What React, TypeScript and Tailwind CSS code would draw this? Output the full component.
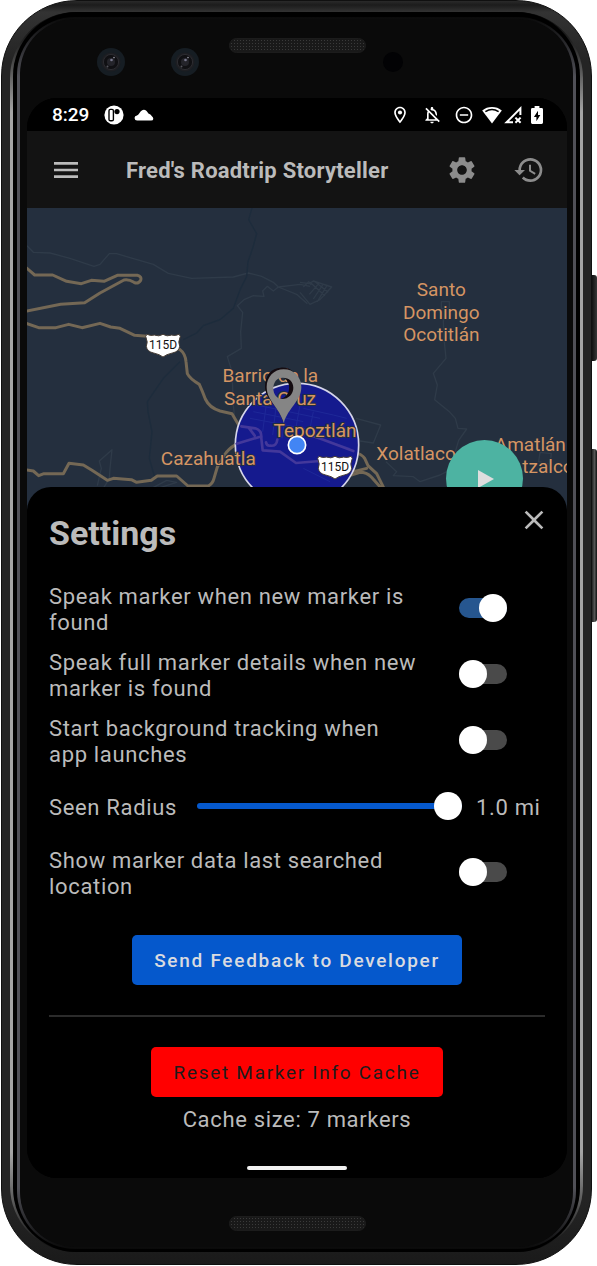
import { useState } from "react";
import {
  MdClose,
  MdHistory,
  MdMenu,
  MdOutlineDoNotDisturbOn,
  MdOutlineLocationOn,
  MdOutlineNotificationsOff,
  MdSettings,
} from "react-icons/md";

const options = [
  { id: "speak-new", label: "Speak marker when new marker is found", on: true },
  { id: "speak-full", label: "Speak full marker details when new marker is found", on: false },
  { id: "tracking", label: "Start background tracking when app launches", on: false },
];

function SwitchRow({ id, label, on }: { id: string; label: string; on: boolean }) {
  return (
    <div className="flex min-h-13 items-center justify-between pr-[38px]">
      <label htmlFor={id} className="w-[370px]">
        {label}
      </label>
      <input
        id={id}
        type="checkbox"
        role="switch"
        defaultChecked={on}
        className="relative mb-1 h-5 w-12 shrink-0 appearance-none rounded-full bg-[#4a4a4a] before:absolute before:-top-1 before:left-0 before:size-7 before:rounded-full before:bg-white before:content-[''] checked:bg-[#26568f] checked:before:left-5"
      />
    </div>
  );
}

function RadiusRow() {
  const [radius, setRadius] = useState(1);
  return (
    <div className="flex min-h-13 items-center">
      <label htmlFor="radius" className="shrink-0">
        Seen Radius
      </label>
      <input
        id="radius"
        type="range"
        min={0.1}
        max={1}
        step={0.1}
        value={radius}
        onChange={(e) => setRadius(Number(e.target.value))}
        className="mr-[14px] mb-1 ml-5 h-7 min-w-0 flex-1 appearance-none bg-transparent [&::-webkit-slider-runnable-track]:h-[6px] [&::-webkit-slider-runnable-track]:rounded-full [&::-webkit-slider-runnable-track]:bg-[#0558cc] [&::-webkit-slider-thumb]:-mt-[11px] [&::-webkit-slider-thumb]:size-7 [&::-webkit-slider-thumb]:appearance-none [&::-webkit-slider-thumb]:rounded-full [&::-webkit-slider-thumb]:bg-white"
      />
      <output htmlFor="radius" className="w-[69px] shrink-0">
        {radius.toFixed(1)} mi
      </output>
    </div>
  );
}

function Shield({ x, y }: { x: number; y: number }) {
  return (
    <g transform={`translate(${x} ${y})`}>
      <path
        d="M-48-32Q-36-26-26-30Q-12-24 0-32Q12-24 26-30Q36-26 48-32L52-26Q44-8 50 4Q48 20 28 24Q10 28 0 36Q-10 28-28 24Q-48 20-50 4Q-44-8-52-26Z"
        fill="#fff"
        stroke="#4a4038"
        strokeWidth="3"
      />
      <text y="13" textAnchor="middle" fontSize="36" fill="#111">
        115D
      </text>
    </g>
  );
}

function MapView() {
  return (
    <svg
      viewBox="21 9 1620 909"
      preserveAspectRatio="xMidYMid slice"
      className="block h-[303px] w-full bg-[#242f3e] font-[Roboto,sans-serif]"
      role="img"
      aria-label="Map of Tepoztlán"
    >
      <g fill="none" stroke="#2f3b49" strokeWidth="4" strokeLinejoin="round">
        <path d="M21 122L40 142L90 144L150 160L222 184L240 178L268 146L290 146L330 158L400 178L445 205L515 220L640 216L685 204L725 214L760 232L775 246L840 238L870 244" />
        <path d="M775 246L760 258L742 244L728 258L732 274L700 272L672 284L652 302L668 322L662 380L664 430L622 455L636 500L640 600L644 640" />
        <path d="M775 246L830 268L862 296M850 246L866 230L874 240" />
        <path d="M840 232L868 236L880 228L935 246L900 284L870 298L840 262M870 232L915 272M885 230L925 262M896 236L868 268M908 240L880 282M920 243L892 290" />
        <path d="M1264 290H1288V310H1264ZM1274 310L1270 350L1272 400L1278 460L1240 505L1252 540L1244 584L1290 622L1306 640L1314 670L1340 672L1316 706L1306 740" />
        <path d="M1008 640L1082 660L1060 714L1020 708M1098 770L1130 800L1120 812L1180 815L1200 830L1260 810L1280 800M1560 742L1594 746L1590 778L1556 770Z" />
        <path d="M232 842L244 790L238 768L276 734L270 790L268 820L250 850M395 850L440 826L470 832L420 848" />
      </g>
      <g fill="none" stroke="#1d2c3c" strokeWidth="4">
        <path d="M696 9L686 44L710 86L698 130L684 170L680 215L662 250L640 310L600 344L550 362L530 384L490 404" />
        <path d="M480 470L430 520L382 590L384 620L396 680L388 760L405 820" />
      </g>
      <g fill="none" stroke="#746855" strokeWidth="9" strokeLinejoin="round" strokeLinecap="round">
        <path d="M15 185L44 210H98L140 229L184 236L214 226L252 229L292 211H352Q366 214 362 226Q354 238 342 232Q326 222 312 225L240 264L194 293L122 298L15 319" />
        <path d="M15 354L56 368H108L146 358L186 368L240 355L272 366L300 370L344 391L400 395L480 434Q496 446 498 470L502 506Q510 522 538 538Q548 560 556 582Q568 608 600 618L636 626L656 660L672 668H706Q724 676 722 700L728 736L780 740L828 774L870 776L1000 800L1040 790" />
        <path d="M15 794L40 798L56 812L72 806H130L147 775L190 780L216 796L262 826L280 820L334 824L350 832L394 826L412 813H470L504 843H565Q578 836 582 820L592 786L612 752Q624 732 648 718L718 696" />
        <path d="M860 690L910 704L1000 740Q1026 748 1034 760L1044 782L1070 806L1092 850M970 818L1020 802Q1040 802 1054 816L1084 850" />
      </g>
      <circle cx="831" cy="720" r="185" fill="#151a8e" stroke="#d5d5ea" strokeWidth="5" />
      <g fill="none" stroke="#1e2898" strokeWidth="3">
        <path d="M700 620L850 650M690 640L860 672M710 600L900 640M740 590L728 680M770 590L758 690M800 600L786 700M840 600L824 690M880 620L866 690M850 610L940 630L980 640M900 700L990 730M850 790L930 830" />
      </g>
      <g fill="none" stroke="#43389b" strokeWidth="8" strokeLinejoin="round" strokeLinecap="round">
        <path d="M664 664L706 670Q726 676 724 700L728 736L780 740L828 774L900 768M650 716L718 696M686 668L704 692M738 712Q740 724 752 722Q770 724 772 704M870 690L910 704L1000 738" />
      </g>
      <g
        fontSize="57"
        fill="#d59563"
        stroke="#242f3e"
        strokeWidth="6"
        strokeLinejoin="round"
        paintOrder="stroke"
        textAnchor="middle"
      >
        <text x="1264" y="273">Santo</text>
        <text x="1264" y="341">Domingo</text>
        <text x="1264" y="408">Ocotitlán</text>
        <text x="751" y="531">Barrio de la</text>
        <text x="750" y="599">Santa Cruz</text>
        <text x="885" y="696">Tepoztlán</text>
        <text x="565" y="781">Cazahuatla</text>
        <text x="1188" y="764">Xolatlaco</text>
        <text x="1531" y="738">Amatlán</text>
        <text x="1507" y="804" textAnchor="start">tzalco</text>
      </g>
      <Shield x={429} y={420} />
      <Shield x={945} y={786} />
      <path
        fillRule="evenodd"
        fill="#140b10"
        d="M782 488C810 486 832 500 832 540C828 580 800 600 790 652C776 600 736 586 735 545C735 510 755 489 782 488ZM776 514A31 34 0 1 0 777 514Z"
      />
      <path
        fillRule="evenodd"
        fill="#858585"
        d="M791 493C822 493 844 516 844 546C844 588 806 606 791 654C778 606 740 588 740 546C740 516 762 493 791 493ZM788 518C770 518 760 532 760 550C760 570 772 582 786 582C806 582 820 566 820 548C820 530 808 518 788 518Z"
      />
      <circle cx="831" cy="720" r="26" fill="#4285f4" stroke="#fff" strokeWidth="5" />
    </svg>
  );
}

function StatusBar() {
  return (
    <div className="flex h-[33px] items-center bg-black pr-6 pl-[25px] text-white">
      <span className="text-[19px] leading-6 font-medium">8:29</span>
      <svg viewBox="0 0 20 20" className="ml-[15px] size-5" aria-hidden="true">
        <circle cx="10" cy="10" r="9.6" fill="#fff" />
        <rect x="5" y="4.4" width="4.4" height="11.4" rx="1.4" fill="#fff" stroke="#000" strokeWidth="1.4" />
        <circle cx="13" cy="6.6" r="2.6" />
      </svg>
      <svg viewBox="0 0 20 12" className="ml-[10px] h-3 w-5" aria-hidden="true">
        <path d="M3.4 11.6A2.6 2.6 0 0 1 3 6.4L4.4 5.6L6.6 2.4Q9.5-.6 12.6 2L14.4 4.4L16.4 5.4L19 8.6Q20 11.6 17 11.6Z" fill="#fff" />
      </svg>
      <div className="ml-auto flex items-center">
        <MdOutlineLocationOn className="size-5" />
        <MdOutlineNotificationsOff className="ml-3 size-5" />
        <MdOutlineDoNotDisturbOn className="ml-3 size-5" />
        <svg viewBox="0 0 20 18" className="ml-2 h-[18px] w-5" aria-hidden="true">
          <path d="M10 17.5L.2 4.6A15.5 15.5 0 0 1 19.8 4.6Z" fill="#fff" />
          <path d="M3.4 5.6Q10 1.4 16.6 5.6" fill="none" stroke="#000" strokeWidth="1.6" />
        </svg>
        <svg viewBox="0 0 20 18" className="ml-[2px] h-[18px] w-5" aria-hidden="true">
          <path d="M9 16.2H2.6L16.4 2.4V9" fill="none" stroke="#fff" strokeWidth="2" />
          <path d="M11.4 11.6L16.6 16.8M16.6 11.6L11.4 16.8" stroke="#fff" strokeWidth="2" />
        </svg>
        <svg viewBox="0 0 12 18" className="ml-[7px] h-[18px] w-3" aria-hidden="true">
          <path d="M3.6 0H8.4V2H10.6Q12 2 12 3.4V16.6Q12 18 10.6 18H1.4Q0 18 0 16.6V3.4Q0 2 1.4 2H3.6Z" fill="#fff" />
          <path d="M7 4.8L2.9 11H5.4V15.2L9.3 9H7Z" fill="#000" />
        </svg>
      </div>
    </div>
  );
}

function Camera() {
  return (
    <svg viewBox="0 0 28 28" className="size-7" aria-hidden="true">
      <circle cx="14" cy="14" r="14" fill="#161d23" />
      <circle cx="14" cy="14" r="9.6" fill="#1d1e22" />
      <circle cx="14" cy="14" r="7.6" fill="#101013" stroke="#2c2c31" />
      <circle cx="14" cy="14" r="4" fill="#24242a" />
      <circle cx="14.5" cy="12" r="1.3" fill="#77778c" />
      <circle cx="17" cy="9.6" r=".8" fill="#9999a5" />
      <circle cx="10.5" cy="18.5" r="1" fill="#55555c" />
    </svg>
  );
}

function Speaker() {
  return (
    <div className="h-[15px] w-[137px] rounded-full border border-[#1c1c1c] bg-[#191919] bg-[radial-gradient(#3a3a3a_1px,transparent_1px)] bg-[size:3px_3px]" />
  );
}

function Screen() {
  return (
    <main className="overflow-hidden rounded-[30px] bg-black text-[#bbbbbb]">
      <StatusBar />
      <header className="flex h-[77px] items-center bg-[#131313] pr-[22px] pl-[23px]">
        <button aria-label="Open menu">
          <MdMenu className="size-8" />
        </button>
        <h1 className="mt-[3px] ml-11 text-[22px] leading-8 font-bold tracking-[0.01em] whitespace-nowrap">
          Fred&apos;s Roadtrip Storyteller
        </h1>
        <button aria-label="Settings" className="ml-auto text-[#8c8c8c]">
          <MdSettings className="size-8" />
        </button>
        <button aria-label="History" className="ml-[35px] text-[#8c8c8c]">
          <MdHistory className="size-8" />
        </button>
      </header>
      <div className="relative">
        <MapView />
        <button
          aria-label="Play"
          className="absolute top-[232px] right-11 flex size-[77px] items-center justify-center rounded-full bg-[#4db3a2]"
        >
          <svg viewBox="0 0 16 18" className="ml-[3px] h-[18px] w-4" aria-hidden="true">
            <path d="M0 0L16 9L0 18Z" fill="#dedede" />
          </svg>
        </button>
      </div>
      <section className="relative -mt-6 rounded-t-[24px] bg-black" aria-labelledby="settings-title">
        <div className="flex items-start justify-between pt-[17px] pr-[17px] pl-[22px]">
          <h2 id="settings-title" className="mt-[9px] text-[34px] leading-10 font-bold">
            Settings
          </h2>
          <button aria-label="Close">
            <MdClose className="size-8" />
          </button>
        </div>
        <div className="px-[22px] pt-[31px]">
          <div className="flex flex-col gap-[14px] text-[22px] leading-[26px] tracking-[0.03em]">
            {options.map((o) => (
              <SwitchRow key={o.id} {...o} />
            ))}
            <RadiusRow />
            <SwitchRow id="show-last" label="Show marker data last searched location" on={false} />
          </div>
          <div className="mt-[35px] flex justify-center">
            <button className="h-[50px] rounded-[5px] bg-[#0558cc] px-[22px] pt-[2px] text-[19px] font-medium tracking-[0.09em] text-[#d9dbe0]">
              Send Feedback to Developer
            </button>
          </div>
          <hr className="mt-[30px] border-t-2 border-[#2b2b2b]" />
          <div className="mt-[30px] flex flex-col items-center gap-[10px]">
            <button className="h-[50px] rounded-[5px] bg-[#ff0000] px-[23px] pt-[2px] text-[19px] tracking-[0.09em] text-[#1c1c1c]">
              Reset Marker Info Cache
            </button>
            <p className="text-[22px] leading-[26px] tracking-[0.03em]">Cache size: 7 markers</p>
          </div>
        </div>
        <div className="flex justify-center pt-[33px] pb-2">
          <div className="h-1 w-[100px] rounded-full bg-[#f2f2f2]" />
        </div>
      </section>
    </main>
  );
}

export default function App() {
  return (
    <div className="flex bg-white pl-px font-[Roboto,sans-serif]">
      <div className="min-w-0 flex-1 rounded-[76px] border border-[#101010] bg-[linear-gradient(#2a2a2a,#1c1c1c_4px,#333_11px,#242424_60px,#242424_1200px,#1a1a1a)] px-2 pt-[11px] pb-3">
        <div className="rounded-[66px] bg-[linear-gradient(#0a0a0a,#222_30px,#a5a5a5_100px,#a5a5a5_1140px,#333_1215px,#0a0a0a)] px-[3px]">
          <div className="rounded-[64px] bg-black px-1 pt-[5px] pb-[3px]">
            <div className="rounded-[58px] bg-[linear-gradient(#0a0a0a,#505057_60px,#505057_1170px,#0a0a0a)] px-[3px] pt-[2px] pb-[2px]">
              <div className="rounded-[55px] bg-[#0a0a0a] pr-[6px] pl-[7px]">
                <div className="grid h-[79px] grid-cols-[1fr_auto_1fr] items-start">
                  <div className="mt-[29px] flex justify-end gap-[46px] pr-[30px]">
                    <Camera />
                    <Camera />
                  </div>
                  <div className="mt-[19px]">
                    <Speaker />
                  </div>
                  <div className="mt-[33px] pl-[17px]">
                    <div className="size-5 rounded-full bg-[#020204]" />
                  </div>
                </div>
                <Screen />
                <div className="flex h-[69px] justify-center pt-[38px]">
                  <Speaker />
                </div>
              </div>
            </div>
          </div>
        </div>
      </div>
      <div className="flex w-[5px] flex-col pt-[275px]" aria-hidden="true">
        <div className="h-[86px] rounded-r-[3px] bg-[linear-gradient(90deg,#111,#383838)]" />
        <div className="mt-[88px] h-[173px] rounded-r-[3px] bg-[linear-gradient(90deg,#222,#555_50%,#111)]" />
      </div>
    </div>
  );
}
